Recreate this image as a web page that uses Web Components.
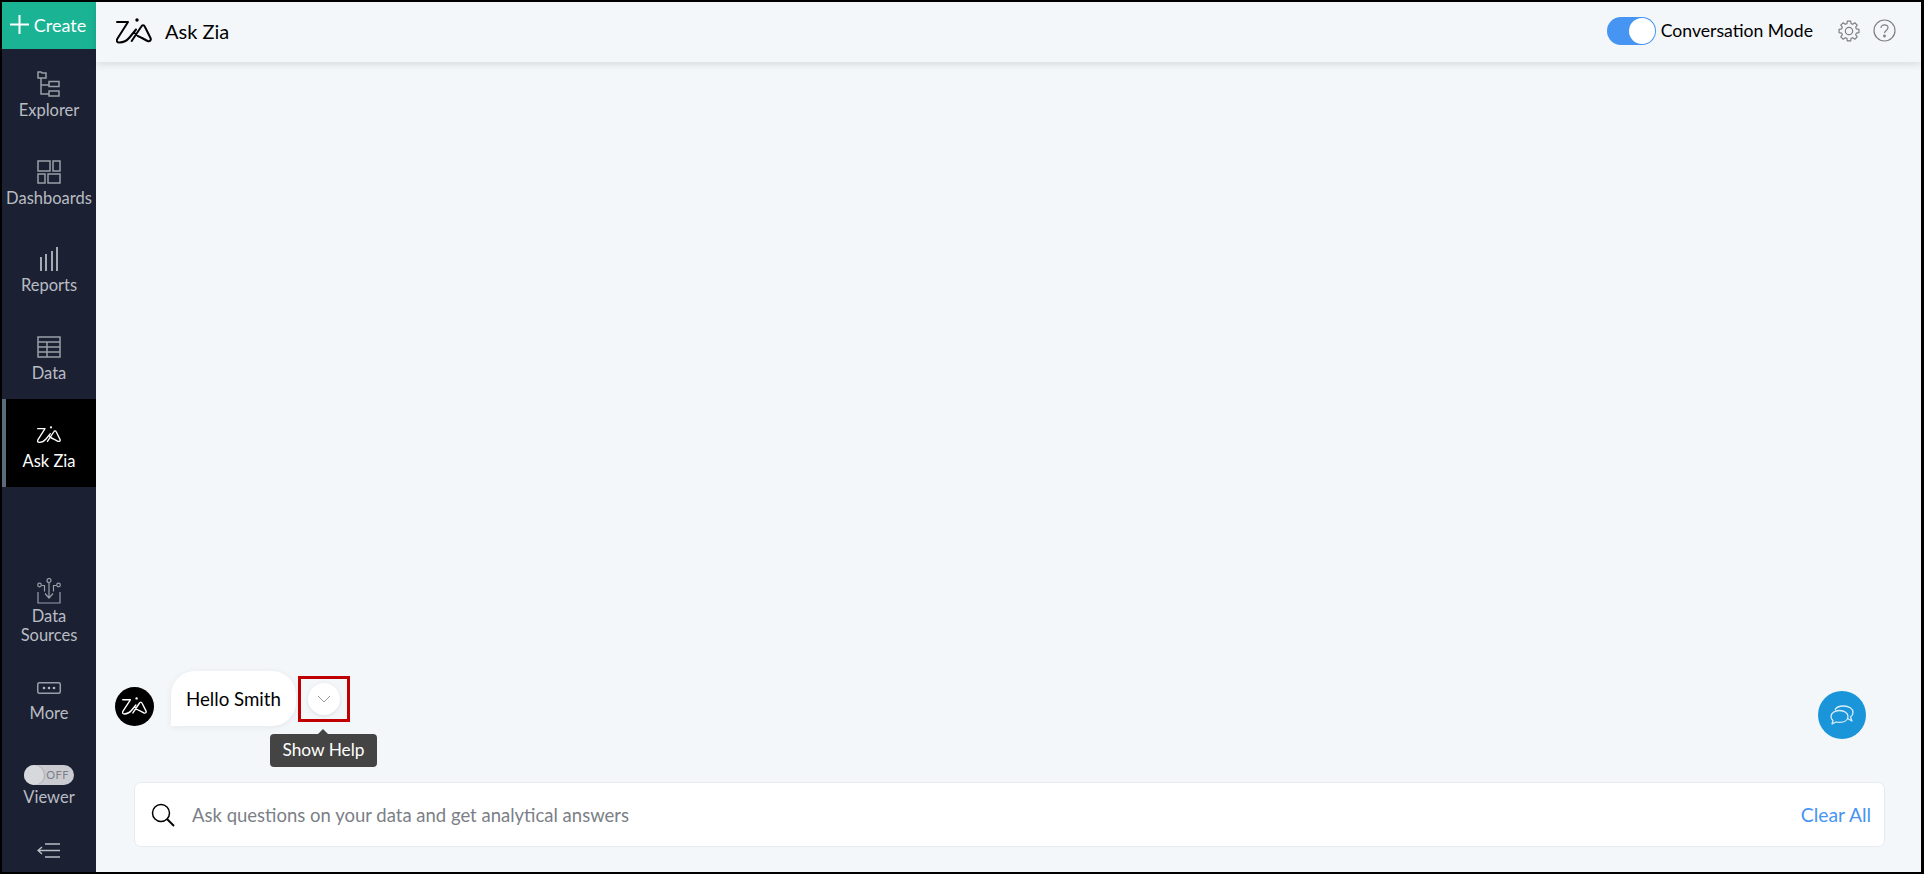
<!DOCTYPE html>
<html>
<head>
<meta charset="utf-8">
<title>Ask Zia</title>
<style>
  html, body { margin: 0; height: 100%; }
  body { background: #000; font-family: Lato, "Liberation Sans", sans-serif; overflow: hidden; }
</style>
</head>
<body>
<app-shell>
  <side-bar slot="side">
    <create-button></create-button>
    <nav-item label="Explorer" icon="explorer"></nav-item>
    <nav-item label="Dashboards" icon="dashboards"></nav-item>
    <nav-item label="Reports" icon="reports"></nav-item>
    <nav-item label="Data" icon="data"></nav-item>
    <nav-item label="Ask Zia" icon="zia" active></nav-item>
    <nav-item slot="bottom" label="Data Sources" icon="sources"></nav-item>
    <nav-item slot="bottom" label="More" icon="more"></nav-item>
    <viewer-toggle slot="bottom"></viewer-toggle>
    <collapse-button slot="bottom"></collapse-button>
  </side-bar>
  <top-bar slot="top"></top-bar>
  <chat-area slot="main"></chat-area>
  <search-bar slot="main"></search-bar>
</app-shell>

<script>
const ICONS = {
  explorer: `<svg width="24" height="26" viewBox="0 0 24 26" fill="none" stroke="#9a9ea8" stroke-width="1.5"><path d="M1 1h3l1 1h4v5H1zM4 7v16h8M4 14h8M12 10.500h10v5H12zM12 20h10v5H12z"/></svg>`,
  dashboards: `<svg width="24" height="24" viewBox="0 0 24 24" fill="none" stroke="#9a9ea8" stroke-width="1.5"><path d="M1 1h12v10H1zM16 1h7v10h-7zM1 14h7v9H1zM11 14h12v9H11z"/></svg>`,
  reports: `<svg width="20" height="26" viewBox="0 0 20 26" fill="none" stroke="#a6a9b1" stroke-width="2"><path d="M2 11v14M7 8v17M13 5v20M18 1v24"/></svg>`,
  data: `<svg width="24" height="22" viewBox="0 0 24 22" fill="none" stroke="#9a9ea8" stroke-width="1.5"><path d="M1 1h22v20H1zM1 6h22M1 11h22M1 16h22M10 6v15"/></svg>`,
  sources: `<svg width="24" height="26" viewBox="0 0 24 26" fill="none" stroke="#9a9ea8" stroke-width="1.200"><circle cx="12" cy="2.500" r="2"/><path d="M12 5v15M8 15.500l4 4.500 4-4.500M1 14v11h22V14"/><circle cx="2.500" cy="7" r="1.800"/><circle cx="21.500" cy="7" r="1.800"/><path d="M4.500 7.500h3v6M19.500 7.500h-3v6"/></svg>`,
  more: `<svg width="24" height="12" viewBox="0 0 24 12" fill="none"><rect x=".75" y=".75" width="22.500" height="10.500" rx="1.500" stroke="#9a9ea8" stroke-width="1.500"/><g fill="#b4b7be"><circle cx="7" cy="6" r="1.300"/><circle cx="12" cy="6" r="1.300"/><circle cx="17" cy="6" r="1.300"/></g></svg>`
}

// the Zia mark is shared by the top bar, the active nav item and the chat avatar
const ziaMark = (w, color, sw) => `<svg width="${w}" viewBox="0 0 36 26" fill="none" stroke="${color}" stroke-width="${sw}" stroke-linecap="round" stroke-linejoin="round" style="display:block">
  <path d="M1 4h11L1.500 20.500C0 23 1 24.500 3.500 24.500 8 24.500 11 22.500 13.500 19.500l6.500-8"/>
  <path d="M18.500 15c2 2.500 4.500 4 7.500 5l5.500 3c2.500.7 4-1 3-3L29 9c-1-2.200-2.800-2.200-4 0L15.700 23"/>
  <circle cx="21" cy="2" r="1.700" fill="${color}" stroke="none"/>
</svg>`

// settings cog outline, eight rounded teeth around the centre
const gearPath = () => {
  const pts = []
  for (let i = 0; i < 8; i++) {
    const a = i * Math.PI / 4
    for (const [r, d] of [[8.4, -0.27], [11, -0.17], [11, 0.17], [8.4, 0.27]]) {
      pts.push(`${(12 + r * Math.cos(a + d)).toFixed(2)} ${(12 + r * Math.sin(a + d)).toFixed(2)}`)
    }
  }
  return 'M' + pts.join('L') + 'Z'
}

class AppShell extends HTMLElement {
  constructor () {
    super()
    this.attachShadow({ mode: 'open' }).innerHTML = `
    <style>
      :host { display: flex; box-sizing: border-box; height: 872px; padding: 2px 3px 0 2px; }
      .side { display: flex; flex: 0 0 94px; }
      .body { flex: 1; display: flex; flex-direction: column; min-width: 0; background: #f4f7fa; }
    </style>
    <div class="side"><slot name="side"></slot></div>
    <div class="body"><slot name="top"></slot><slot name="main"></slot></div>`
  }
}

class SideBar extends HTMLElement {
  constructor () {
    super()
    this.attachShadow({ mode: 'open' }).innerHTML = `
    <style>
      :host { display: flex; flex-direction: column; width: 94px; background: #1b2132; color: #b9bcc3; font-size: 16.500px; }
      .bottom { margin-top: auto; display: flex; flex-direction: column; }
    </style>
    <slot></slot>
    <div class="bottom"><slot name="bottom"></slot></div>`
  }
}

class CreateButton extends HTMLElement {
  constructor () {
    super()
    this.attachShadow({ mode: 'open' }).innerHTML = `
    <style>
      :host { display: flex; align-items: center; justify-content: center; gap: 5px; box-sizing: border-box; height: 47px; padding: 0 2px 2px 0; background: #1ab394; color: #fff; font-size: 18px; }
      svg { display: block; }
    </style>
    <svg width="19" height="19" viewBox="0 0 19 19" stroke="#fff" stroke-width="2"><path d="M9.500 0v19M0 9.500h19"/></svg>
    <span>Create</span>`
  }
}

class NavItem extends HTMLElement {
  constructor () {
    super()
    const icon = this.getAttribute('icon')
    const glyph = icon === 'zia' ? ziaMark(24, '#fff', 2) : ICONS[icon]
    this.attachShadow({ mode: 'open' }).innerHTML = `
    <style>
      :host { display: flex; flex-direction: column; align-items: center; box-sizing: border-box; height: 87.500px; padding-top: 22px; line-height: 19px; text-align: center; }
      :host([active]) { background: #000; color: #fff; border-left: 4px solid #5b6b7a; padding-right: 4px; padding-top: 27px; }
      :host([icon="sources"]) { height: 94px; padding-top: 0; }
      :host([icon="more"]) { height: 90px; padding-top: 10px; }
      :host([icon="more"]) .glyph { height: 12px; margin-bottom: 10px; }
      :host([icon="sources"]) .glyph { margin-bottom: 3px; }
      .glyph { height: 26px; margin-bottom: 4px; display: flex; align-items: center; }
      :host([active]) .glyph { height: 18px; margin-bottom: 8px; }
      svg { display: block; }
      span { display: block; max-width: 70px; }
      :host([icon="dashboards"]) span { max-width: none; }
    </style>
    <div class="glyph">${glyph}</div>
    <span>${this.getAttribute('label')}</span>`
  }
}

class ViewerToggle extends HTMLElement {
  constructor () {
    super()
    this.attachShadow({ mode: 'open' }).innerHTML = `
    <style>
      :host { display: flex; flex-direction: column; align-items: center; height: 66px; padding-top: 3px; box-sizing: border-box; line-height: 19px; }
      .track { position: relative; box-sizing: border-box; width: 50px; height: 20px; border-radius: 10px; background: #c9cbd0; margin-bottom: 3px; }
      .knob { position: absolute; left: 0; top: 0; width: 20px; height: 20px; border-radius: 50%; background: #d7d8dc; box-shadow: 1px 0 1px rgba(0,0,0,.15); }
      .off { position: absolute; right: 5px; top: 3px; font-size: 11px; line-height: 14px; letter-spacing: .5px; color: #7d7f85; }
    </style>
    <div class="track"><div class="knob"></div><div class="off">OFF</div></div>
    <span>Viewer</span>`
  }
}

class CollapseButton extends HTMLElement {
  constructor () {
    super()
    this.attachShadow({ mode: 'open' }).innerHTML = `
    <style>
      :host { display: flex; justify-content: center; align-items: center; height: 44px; }
      svg { display: block; }
    </style>
    <svg width="24" height="15" viewBox="0 0 24 15" fill="none" stroke="#b9bcc3" stroke-width="1.500"><path d="M8 1h15M1 7.500h22M8 14h15M5 4L1 7.500 5 11"/></svg>`
  }
}

class TopBar extends HTMLElement {
  constructor () {
    super()
    this.attachShadow({ mode: 'open' }).innerHTML = `
    <style>
      :host { display: flex; align-items: center; box-sizing: border-box; height: 60px; padding: 0 25px 3px 20px; background: #f4f7fa; box-shadow: 0 2px 8px rgba(0,0,0,.12); font-size: 17.600px; color: #000; position: relative; }
      h1 { font: inherit; font-size: 20px; margin: 0 0 0 13px; flex: 1; }
      .switch { position: relative; box-sizing: border-box; width: 49px; height: 28px; border-radius: 14px; background: #4695f2; margin-right: 5px; }
      .switch i { position: absolute; right: 1px; top: 1px; width: 26px; height: 26px; border-radius: 50%; background: #fff; }
      .mode { margin-right: 25px; }
      .gear { margin-right: 13px; }
      svg { display: block; }
    </style>
    ${ziaMark(36, '#000', 2)}
    <h1>Ask Zia</h1>
    <div class="switch"><i></i></div>
    <span class="mode">Conversation Mode</span>
    <svg class="gear" width="22" height="22" viewBox="0 0 24 24" fill="none" stroke="#7f7f7f" stroke-width="1.300" stroke-linejoin="round"><circle cx="12" cy="12" r="4"/><path d="${gearPath()}"/></svg>
    <svg width="23" height="23" viewBox="0 0 23 23" fill="none" stroke="#7f7f7f" stroke-width="1.200"><circle cx="11.500" cy="11.500" r="10.500"/><path d="M8 9c0-2 1.500-3.200 3.500-3.200S15 7 15 8.800c0 2.500-3.500 2.700-3.500 5.200"/><circle cx="11.500" cy="17" r=".8" fill="#7f7f7f"/></svg>`
  }
}

class ChatArea extends HTMLElement {
  constructor () {
    super()
    this.attachShadow({ mode: 'open' }).innerHTML = `
    <style>
      :host { display: flex; flex: 1; align-items: flex-end; position: relative; padding: 0 0 56px 19px; font-size: 18.700px; color: #000; }
      .avatar { display: flex; align-items: center; justify-content: center; width: 39px; height: 39px; border-radius: 50%; background: #000; flex: none; }
      .bubble { display: flex; align-items: center; height: 55px; padding: 0 15px; margin-left: 17px; background: #fff; border-radius: 24px 24px 24px 0; box-shadow: 0 1px 6px rgba(0,0,0,.07); }
      .help { position: relative; display: flex; align-items: center; justify-content: center; box-sizing: border-box; width: 52px; height: 46px; margin: 0 0 4px 2px; border: 3px solid #c00000; }
      .chev { display: flex; align-items: center; justify-content: center; width: 32px; height: 32px; border-radius: 50%; background: #fff; box-shadow: 0 1px 4px rgba(0,0,0,.1); }
      .tip { position: absolute; left: -31px; top: 55px; width: 107px; height: 33px; box-sizing: border-box; border-radius: 4px; background: #444; color: #fff; font-size: 17.300px; line-height: 32px; text-align: center; }
      .tip::before { content: ""; position: absolute; left: 47px; top: -5px; border: 6px solid transparent; border-top: 0; border-bottom-color: #444; }
      .fab { position: absolute; right: 55px; bottom: 43px; display: flex; align-items: center; justify-content: center; width: 48px; height: 48px; border-radius: 50%; background: #1b95d9; }
      svg { display: block; }
    </style>
    <div class="avatar">${ziaMark(25, '#fff', 2)}</div>
    <div class="bubble">Hello Smith</div>
    <div class="help">
      <div class="chev"><svg width="14" height="8" viewBox="0 0 14 8" fill="none" stroke="#9a9a9a"><path d="M1 1l6 6 6-6"/></svg></div>
      <div class="tip">Show Help</div>
    </div>
    <div class="fab"><svg width="24" height="20" viewBox="0 0 24 20" fill="none" stroke="#d8edf9" stroke-width="1.300" stroke-linejoin="round"><path d="M5 5C6 2.500 9 1 13.500 1 19 1 23 3.500 23 7.500c0 2-1 3.500-2.500 4.500l1.500 4-4.500-2.500"/><path d="M9.500 5.500C4.500 5.500 1 8 1 11.500c0 1.500.7 3 2 4l-1 3.500 4-2c1 .3 2 .4 3.500.4 5 0 8.500-2.400 8.500-5.900s-3.500-6-8.500-6z"/></svg></div>`
  }
}

class SearchBar extends HTMLElement {
  constructor () {
    super()
    this.attachShadow({ mode: 'open' }).innerHTML = `
    <style>
      :host { display: flex; align-items: center; box-sizing: border-box; height: 65px; margin: 0 36px 25px 38px; padding: 0 13px 0 16px; background: #fff; border: 1px solid #e7eaef; border-radius: 7px; font-size: 18.500px; }
      svg { display: block; margin-right: 17px; }
      .hint { flex: 1; color: #7b7f86; }
      .clear { color: #4695f2; font-size: 19.300px; }
    </style>
    <svg width="24" height="24" viewBox="0 0 24 24" fill="none" stroke="#000" stroke-width="1.500"><circle cx="10" cy="10" r="8.500"/><path d="M16 16l7 7" stroke-width="2"/></svg>
    <span class="hint">Ask questions on your data and get analytical answers</span>
    <span class="clear">Clear All</span>`
  }
}

customElements.define('app-shell', AppShell)
customElements.define('side-bar', SideBar)
customElements.define('create-button', CreateButton)
customElements.define('nav-item', NavItem)
customElements.define('viewer-toggle', ViewerToggle)
customElements.define('collapse-button', CollapseButton)
customElements.define('top-bar', TopBar)
customElements.define('chat-area', ChatArea)
customElements.define('search-bar', SearchBar)
</script>
</body>
</html>
